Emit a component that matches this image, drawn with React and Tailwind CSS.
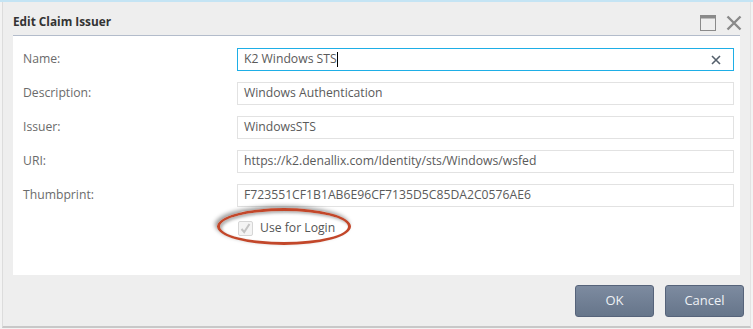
import React from "react";

const font = { fontFamily: '"Open Sans", "Noto Sans", sans-serif' };

function Row({ label, value, active }) {
  return (
    <div className="flex items-center h-[23px]">
      <div className="w-[214px] shrink-0 text-[12.2px] text-[#6b6b6b]">{label}</div>
      <div
        className={
          "relative flex items-center w-[497px] h-[23px] bg-white px-[6px] text-[12.2px] text-[#5a5a5a] " +
          (active ? "border border-[#1eaee6]" : "border border-[#e2e2e2]")
        }
      >
        <span>{value}</span>
        {active && <span className="w-px h-[15px] bg-black" />}
        {active && (
          <svg className="absolute right-[12px] top-[6px]" width="10" height="10" viewBox="0 0 10 10">
            <path d="M1 1 L9 9 M9 1 L1 9" stroke="#55606c" strokeWidth="1.6" />
          </svg>
        )}
      </div>
    </div>
  );
}

export default function App() {
  return (
    <div style={font} className="w-[753px] h-[329px] bg-[#f3f3f3] relative overflow-hidden">
      <div className="h-[2px] bg-[#c4e4f4]" />
      <div className="absolute left-[2px] top-[2px] right-[2px] bottom-[1px] bg-[#eeeeee] border-l border-[#dcdcdc] border-b-2 border-b-[#c8c8c8] border-r border-r-[#e2e2e2] flex flex-col">
        <div className="flex items-center h-[33px] pl-[10px] pr-[8px] pt-[6px]">
          <div className="font-bold text-[11.8px] text-[#333] flex-1">Edit Claim Issuer</div>
          <svg width="16" height="16" viewBox="0 0 16 16" className="mr-[10px] mt-[2px]">
            <rect x="0.5" y="0.5" width="15" height="15" fill="none" stroke="#8a8a8a" strokeWidth="1" />
            <rect x="0.5" y="0.5" width="15" height="3" fill="#8a8a8a" />
          </svg>
          <svg width="16" height="16" viewBox="0 0 16 16" className="mt-[2px]">
            <path d="M1.5 1.5 L14.5 14.5 M14.5 1.5 L1.5 14.5" stroke="#8a8a8a" strokeWidth="2.4" />
          </svg>
        </div>
        <div className="mx-[10px] h-px bg-[#b3bccb]" />
        <div className="mx-[10px] bg-white h-[239px] pt-[12px] pl-[10px] relative">
          <div className="flex flex-col gap-[11px]">
            <Row label="Name:" value="K2 Windows STS" active />
            <Row label="Description:" value="Windows Authentication" />
            <Row label="Issuer:" value="WindowsSTS" />
            <Row label="URI:" value="https://k2.denallix.com/Identity/sts/Windows/wsfed" />
            <Row label="Thumbprint:" value="F723551CF1B1AB6E96CF7135D5C85DA2C0576AE6" />
          </div>
          <div className="flex items-center mt-[13px] ml-[215px] h-[17px]">
            <div className="w-[15px] h-[15px] border border-[#d6d6d6] bg-[#f4f4f4] rounded-[2px] flex items-center justify-center">
              <svg width="13" height="13" viewBox="0 0 13 13">
                <path d="M2.5 7 L5.2 10 L10.5 2" stroke="#c4c4c4" strokeWidth="2" fill="none" />
              </svg>
            </div>
            <span className="ml-[7px] text-[12.2px] text-[#555]">Use for Login</span>
          </div>
          <div className="absolute left-[204px] top-[172px] w-[134px] h-[37px] rounded-[50%] border-[3px] border-[#c2472a] shadow-[-2px_-2px_4px_rgba(0,0,0,0.4),inset_2px_2px_3px_rgba(0,0,0,0.3)]" />
        </div>
        <div className="flex justify-end gap-[11px] pr-[6px] pt-[10px]">
          <button className="w-[79px] h-[32px] rounded-[3px] border border-[#56637a] bg-gradient-to-b from-[#7d8ba0] to-[#66758a] text-[#eef1f5] text-[13px]">OK</button>
          <button className="w-[79px] h-[32px] rounded-[3px] border border-[#56637a] bg-gradient-to-b from-[#7d8ba0] to-[#66758a] text-[#eef1f5] text-[13px]">Cancel</button>
        </div>
      </div>
    </div>
  );
}
